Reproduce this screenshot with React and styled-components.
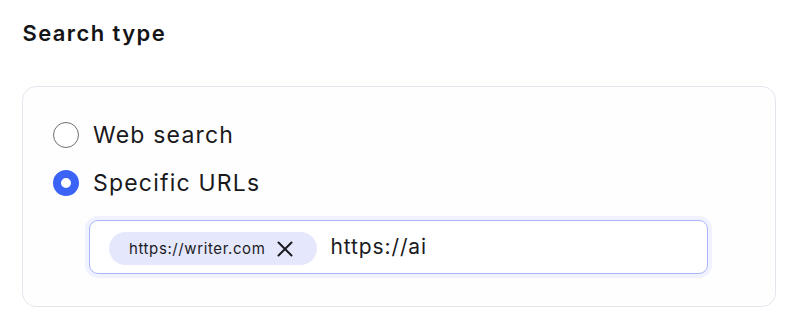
import React from "react";
import styled, { createGlobalStyle } from "styled-components";

const Global = createGlobalStyle`
  html, body { margin: 0; padding: 0; background: #ffffff; }
  body { font-family: "Inter", "Noto Sans", sans-serif; color: #1b1b1f; }
  * { box-sizing: border-box; }
`;

const Page = styled.div`
  width: 800px;
  height: 325px;
  padding: 18px 24px 0 21.5px;
  display: flex;
  flex-direction: column;
`;

const Title = styled.h2`
  margin: 0 0 0 1px;
  font-size: 22px;
  line-height: 30px;
  font-weight: 600;
  letter-spacing: 1.4px;
  color: #151518;
`;

const Card = styled.div`
  margin-top: 38px;
  width: 754px;
  height: 221px;
  border: 1px solid #e4e6ee;
  border-radius: 14px;
  background: #fefeff;
  padding: 32px 0 0 30.5px;
  display: flex;
  flex-direction: column;
  gap: 16px;
`;

const Option = styled.label`
  display: flex;
  align-items: center;
  gap: 14px;
  height: 32px;
  font-size: 23px;
  letter-spacing: 1.2px;
  color: #19191c;
  cursor: pointer;
`;

const Radio = styled.span`
  width: 26px;
  height: 26px;
  border-radius: 50%;
  flex: none;
  border: ${(p) => (p.$checked ? "8px solid #3b63f6" : "1.5px solid #6f6f73")};
  background: #ffffff;
`;

const InputWrap = styled.div`
  margin: 5px 0 0 36px;
  width: 619px;
  height: 54px;
  border: 1px solid #a9b6fd;
  border-radius: 9px;
  background: #ffffff;
  box-shadow: 0 0 0 4px #f0f2ff;
  display: flex;
  align-items: center;
  padding-left: 19px;
  gap: 13px;
`;

const Chip = styled.span`
  display: inline-flex;
  align-items: center;
  height: 33px;
  margin-top: 3px;
  padding: 0 22px 0 20px;
  border-radius: 17px;
  background: #e5e8fc;
  font-size: 15px;
  letter-spacing: 0.6px;
  color: #1b1b1f;
  gap: 10px;
`;

const RemoveIcon = styled.svg`
  width: 20px;
  height: 20px;
  flex: none;
`;

const TypedText = styled.span`
  font-size: 21px;
  letter-spacing: 0.9px;
  color: #1b1b1f;
  margin-top: -1px;
`;

export default function App() {
  return (
    <>
      <Global />
      <Page>
        <Title>Search type</Title>
        <Card>
          <Option>
            <Radio />
            Web search
          </Option>
          <Option>
            <Radio $checked />
            Specific URLs
          </Option>
          <InputWrap>
            <Chip>
              https://writer.com
              <RemoveIcon viewBox="0 0 20 20">
                <path d="M3.5 3.5 L16.5 16.5 M16.5 3.5 L3.5 16.5" stroke="#1b1b1f" strokeWidth="2" strokeLinecap="round" fill="none" />
              </RemoveIcon>
            </Chip>
            <TypedText>https://ai</TypedText>
          </InputWrap>
        </Card>
      </Page>
    </>
  );
}
